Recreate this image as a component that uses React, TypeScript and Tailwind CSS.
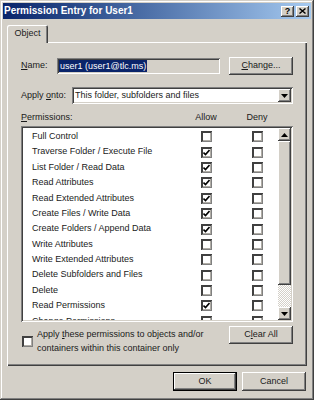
import React from "react";

const raised =
  "shadow-[inset_-1px_-1px_0_#404040,inset_1px_1px_0_#fff,inset_-2px_-2px_0_#808080,inset_2px_2px_0_#D4D0C8]";
const sunken =
  "shadow-[inset_1px_1px_0_#808080,inset_-1px_-1px_0_#fff,inset_2px_2px_0_#404040,inset_-2px_-2px_0_#D4D0C8]";

const perms: [string, boolean, boolean][] = [
  ["Full Control", false, false],
  ["Traverse Folder / Execute File", true, false],
  ["List Folder / Read Data", true, false],
  ["Read Attributes", true, false],
  ["Read Extended Attributes", true, false],
  ["Create Files / Write Data", true, false],
  ["Create Folders / Append Data", true, false],
  ["Write Attributes", false, false],
  ["Write Extended Attributes", false, false],
  ["Delete Subfolders and Files", false, false],
  ["Delete", false, false],
  ["Read Permissions", true, false],
  ["Change Permissions", false, false],
];

function Check({ checked }: { checked: boolean }) {
  return (
    <div
      className={`w-[11px] h-[11px] bg-white shrink-0 flex items-center justify-center shadow-[inset_1px_1px_0_#404040,inset_-1px_-1px_0_#808080,inset_2px_2px_0_#404040,inset_-2px_-2px_0_#B0ADA6]`}
    >
      {checked && (
        <svg width="7" height="7" viewBox="0 0 7 7">
          <path d="M0.5 3.5 L2.5 5.5 L6.5 1" stroke="#000" strokeWidth="1.6" fill="none" />
        </svg>
      )}
    </div>
  );
}

function Arrow({ dir }: { dir: "up" | "down" }) {
  return (
    <svg width="7" height="4" viewBox="0 0 7 4">
      {dir === "up" ? <path d="M3.5 0 L7 4 L0 4 Z" fill="#000" /> : <path d="M0 0 L7 0 L3.5 4 Z" fill="#000" />}
    </svg>
  );
}

export default function App() {
  return (
    <div className="w-[314px] h-[400px] overflow-hidden font-['Liberation_Sans',Arial,sans-serif] text-[9px] text-[#1a1a1a]">
      <div
        className={`w-[314px] h-[400px] bg-[#D4D0C8] p-[3px] flex flex-col shadow-[inset_-1px_-1px_0_#404040,inset_1px_1px_0_#D4D0C8,inset_-2px_-2px_0_#808080,inset_2px_2px_0_#fff]`}
      >
        {/* Title bar */}
        <div className="h-[16px] shrink-0 flex items-center pl-[1px] pr-[2px] bg-linear-to-r from-[#0A246A] to-[#A6CAF0]">
          <span className="text-white font-bold text-[10px] leading-none">Permission Entry for User1</span>
          <div className="ml-auto flex gap-[2px]">
            <div className={`w-[13px] h-[11px] bg-[#D4D0C8] flex items-center justify-center ${raised}`}>
              <span className="font-bold text-[9px] leading-none text-black">?</span>
            </div>
            <div className={`w-[13px] h-[11px] bg-[#D4D0C8] flex items-center justify-center ${raised}`}>
              <svg width="7" height="6" viewBox="0 0 7 6">
                <path d="M0.5 0.5 L6.5 5.5 M6.5 0.5 L0.5 5.5" stroke="#000" strokeWidth="1.4" />
              </svg>
            </div>
          </div>
        </div>

        {/* Body */}
        <div className="flex-1 flex flex-col px-[4px] pt-[6px]">
          {/* Tab strip */}
          <div className="flex h-[17px] shrink-0">
            <div
              className={`relative z-10 w-[41px] h-[18px] bg-[#D4D0C8] rounded-t-[2px] flex items-center justify-center pb-[1px] shadow-[inset_1px_1px_0_#fff,inset_-1px_0_0_#404040,inset_-2px_0_0_#808080]`}
            >
              Object
            </div>
          </div>

          {/* Panel */}
          <div
            className={`h-[324px] shrink-0 flex flex-col px-[14px] shadow-[inset_1px_1px_0_#fff,inset_-1px_-1px_0_#404040,inset_-2px_-2px_0_#808080]`}
          >
            {/* Name row */}
            <div className="mt-[15px] h-[18px] flex items-center">
              <div className="w-[36px]">
                <span className="underline">N</span>ame:
              </div>
              <div className={`w-[163px] h-[16px] bg-[#D4D0C8] flex items-center pl-[2px] ${sunken}`}>
                <span className="bg-[#0A246A] text-white h-[12px] leading-[12px] px-[1px]">user1 (user1@tlc.ms)</span>
              </div>
              <div className={`ml-auto w-[64px] h-[18px] bg-[#D4D0C8] flex items-center justify-center ${raised}`}>
                <span>
                  <span className="underline">C</span>hange...
                </span>
              </div>
            </div>

            {/* Apply onto row */}
            <div className="mt-[12px] h-[17px] flex items-center">
              <div className="w-[51px]">
                Apply <span className="underline">o</span>nto:
              </div>
              <div className={`flex-1 h-[17px] bg-white flex items-center pl-[3px] pr-[2px] ${sunken}`}>
                <span className="flex-1">This folder, subfolders and files</span>
                <div className={`w-[13px] h-[13px] bg-[#D4D0C8] flex items-center justify-center ${raised}`}>
                  <Arrow dir="down" />
                </div>
              </div>
            </div>

            {/* Permissions header */}
            <div className="mt-[8px] h-[12px] flex items-center">
              <div className="flex-1">
                <span className="underline">P</span>ermissions:
              </div>
              <div className="w-[40px] text-center">Allow</div>
              <div className="w-[40px] ml-[11px] text-center">Deny</div>
              <div className="w-[16px]" />
            </div>

            {/* List */}
            <div className={`mt-[2px] h-[196px] bg-white flex p-[2px] ${sunken}`}>
              <div className="flex-1 overflow-hidden pt-[1px]">
                {perms.map(([name, allow, deny]) => (
                  <div key={name} className="h-[15.4px] flex items-center pl-[9px]">
                    <div className="flex-1 whitespace-nowrap">{name}</div>
                    <Check checked={allow} />
                    <div className="ml-[40px] mr-[15px]">
                      <Check checked={deny} />
                    </div>
                  </div>
                ))}
              </div>
              <div className="w-[13px] flex flex-col">
                <div className={`h-[13px] bg-[#D4D0C8] flex items-center justify-center ${raised}`}>
                  <Arrow dir="up" />
                </div>
                <div className={`h-[144px] bg-[#D4D0C8] ${raised}`} />
                <div className="flex-1 bg-[repeating-conic-gradient(#fff_0_25%,#D4D0C8_0_50%)] bg-[length:2px_2px]" />
                <div className={`h-[13px] bg-[#D4D0C8] flex items-center justify-center ${raised}`}>
                  <Arrow dir="down" />
                </div>
              </div>
            </div>

            {/* Bottom row */}
            <div className="mt-[4px] flex items-start">
              <div className="flex items-center pt-[1px]">
                <div className="ml-[1px]">
                  <Check checked={false} />
                </div>
                <div className="ml-[4px] leading-[14px]">
                  Apply <span className="underline">t</span>hese permissions to objects and/or
                  <br />
                  containers within this container only
                </div>
              </div>
              <div className={`ml-auto w-[64px] h-[18px] bg-[#D4D0C8] flex items-center justify-center ${raised}`}>
                <span>
                  C<span className="underline">l</span>ear All
                </span>
              </div>
            </div>
          </div>

          {/* Buttons */}
          <div className="mt-[6px] flex justify-end gap-[5px] mr-[1px]">
            <div
              className={`w-[64px] h-[19px] bg-[#D4D0C8] flex items-center justify-center shadow-[inset_0_0_0_1px_#000,inset_-2px_-2px_0_#404040,inset_2px_2px_0_#fff,inset_-3px_-3px_0_#808080]`}
            >
              OK
            </div>
            <div className={`w-[64px] h-[19px] bg-[#D4D0C8] flex items-center justify-center ${raised}`}>Cancel</div>
          </div>
        </div>
      </div>
    </div>
  );
}
